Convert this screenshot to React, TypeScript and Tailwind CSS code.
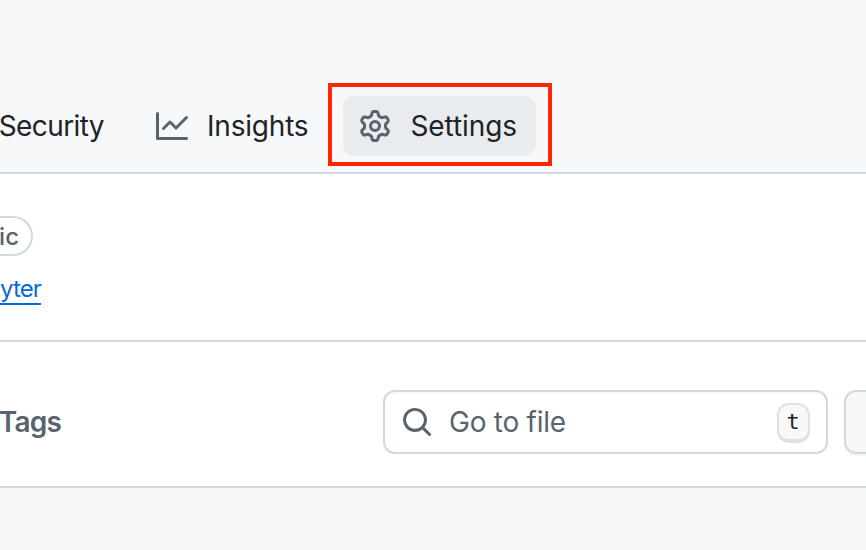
import React from "react";

type IconProps = { path: string; className?: string };

const GRAPH =
  "M1.5 1.75V13.5h13.75a.75.75 0 0 1 0 1.5H.75a.75.75 0 0 1-.75-.75V1.75a.75.75 0 0 1 1.5 0Zm14.28 2.53-5.25 5.25a.75.75 0 0 1-1.06 0L7 7.06 4.28 9.78a.751.751 0 0 1-1.042-.018.751.751 0 0 1-.018-1.042l3.25-3.25a.75.75 0 0 1 1.06 0L10 7.94l4.72-4.72a.751.751 0 0 1 1.042.018.751.751 0 0 1 .018 1.042Z";
const GEAR =
  "M8 0a8.2 8.2 0 0 1 .701.031C9.444.095 9.99.645 10.16 1.29l.288 1.107c.018.066.079.158.212.224.231.114.454.243.668.386.123.082.233.09.299.071l1.103-.303c.644-.176 1.392.021 1.82.63.27.385.506.792.704 1.218.315.675.111 1.422-.364 1.891l-.814.806c-.049.048-.098.147-.088.294.016.257.016.515 0 .772-.01.147.038.246.088.294l.814.806c.475.469.679 1.216.364 1.891a7.977 7.977 0 0 1-.704 1.217c-.428.61-1.176.807-1.82.63l-1.102-.302c-.067-.019-.177-.011-.3.071a5.909 5.909 0 0 1-.668.386c-.133.066-.194.158-.211.224l-.29 1.106c-.168.646-.715 1.196-1.458 1.26a8.006 8.006 0 0 1-1.402 0c-.743-.064-1.289-.614-1.458-1.26l-.289-1.106c-.018-.066-.079-.158-.212-.224a5.738 5.738 0 0 1-.668-.386c-.123-.082-.233-.09-.299-.071l-1.103.303c-.644.176-1.392-.021-1.82-.63a8.12 8.12 0 0 1-.704-1.218c-.315-.675-.111-1.422.363-1.891l.815-.806c.05-.048.098-.147.088-.294a6.214 6.214 0 0 1 0-.772c.01-.147-.038-.246-.088-.294l-.815-.806C.635 6.045.431 5.298.746 4.623a7.92 7.92 0 0 1 .704-1.217c.428-.61 1.176-.807 1.82-.63l1.102.302c.067.019.177.011.3-.071.214-.143.437-.272.668-.386.133-.066.194-.158.211-.224l.29-1.106C6.009.645 6.556.095 7.299.03 7.53.01 7.764 0 8 0Zm-.571 1.525c-.036.003-.108.036-.137.146l-.289 1.105c-.147.561-.549.967-.998 1.189-.173.086-.34.183-.5.29-.417.278-.97.423-1.529.27l-1.103-.303c-.109-.03-.175.016-.195.045-.22.312-.412.644-.573.99-.014.031-.021.11.059.19l.815.806c.411.406.562.957.53 1.456a4.709 4.709 0 0 0 0 .582c.032.499-.119 1.05-.53 1.456l-.815.806c-.081.08-.073.159-.059.19.162.346.353.677.573.989.02.03.085.076.195.046l1.102-.303c.56-.153 1.113-.008 1.53.27.161.107.328.204.501.29.447.222.85.629.997 1.189l.289 1.105c.029.109.101.143.137.146a6.6 6.6 0 0 0 1.142 0c.036-.003.108-.036.137-.146l.289-1.105c.147-.561.549-.967.998-1.189.173-.086.34-.183.5-.29.417-.278.97-.423 1.529-.27l1.103.303c.109.029.175-.016.195-.045.22-.313.411-.644.573-.99.014-.031.021-.11-.059-.19l-.815-.806c-.411-.406-.562-.957-.53-1.456a4.709 4.709 0 0 0 0-.582c-.032-.499.119-1.05.53-1.456l.815-.806c.081-.08.073-.159.059-.19a6.464 6.464 0 0 0-.573-.989c-.02-.03-.085-.076-.195-.046l-1.102.303c-.56.153-1.113.008-1.53-.27a4.44 4.44 0 0 0-.501-.29c-.447-.222-.85-.629-.997-1.189l-.289-1.105c-.029-.11-.101-.143-.137-.146a6.6 6.6 0 0 0-1.142 0ZM11 8a3 3 0 1 1-6 0 3 3 0 0 1 6 0ZM9.5 8a1.5 1.5 0 1 0-3.001.001A1.5 1.5 0 0 0 9.5 8Z";
const SEARCH =
  "M10.68 11.74a6 6 0 0 1-7.922-8.982 6 6 0 0 1 8.982 7.922l3.04 3.04a.749.749 0 0 1-.326 1.275.749.749 0 0 1-.734-.215ZM11.5 7a4.499 4.499 0 1 0-8.997 0A4.499 4.499 0 0 0 11.5 7Z";

function Icon({ path, className = "" }: IconProps) {
  return (
    <svg viewBox="0 0 16 16" fill="currentColor" className={`size-8 shrink-0 text-[#59636e] ${className}`}>
      <path d={path} />
    </svg>
  );
}

export default function App() {
  return (
    <div className="flex h-[550px] w-[866px] flex-col overflow-hidden bg-white font-['Inter','Liberation_Sans',sans-serif] text-[28px] leading-8 text-[#1f2328]">
      <header className="h-[174px] shrink-0 border-b-2 border-[#d1d9e0] bg-[#f6f8fa] pt-[83px]">
        <nav className="flex h-[83px] items-center">
          <a className="flex w-[104px] shrink-0 justify-end pt-[3px]">
            <span className="tracking-[-0.6px]">Security</span>
          </a>
          <a className="ml-[52px] flex w-[172px] shrink-0 items-center gap-[19px] pt-[3px]">
            <Icon path={GRAPH} />
            <span className="tracking-[-0.2px]">Insights</span>
          </a>
          <div className="h-[83px] w-[224px] shrink-0 border-4 border-[#ff2600] pt-[9px] pr-3 pl-[11px]">
            <a className="flex h-[60px] items-center gap-[19.5px] rounded-xl bg-[#e9ecef] pl-4">
              <Icon path={GEAR} />
              <span className="tracking-[-0.1px]">Settings</span>
            </a>
          </div>
        </nav>
      </header>

      <section className="flex h-[168px] shrink-0 flex-col items-start border-b-2 border-[#d1d9e0] pt-[42px]">
        <div className="flex h-10 w-[33px] items-center justify-end rounded-r-full border-2 border-l-0 border-[#d1d9e0] pt-px pr-3 text-2xl font-medium text-[#59636e]">
          ic
        </div>
        <div className="mt-[18px] flex h-[31px] w-[41px] justify-end border-b-2 border-[#0969da] text-2xl leading-[30px] tracking-[-0.9px] text-[#0969da]">
          yter
        </div>
      </section>

      <section className="flex h-[146px] shrink-0 items-start border-b-2 border-[#d1d9e0] pt-12">
        <div className="flex h-16 w-[61px] shrink-0 items-center justify-end font-semibold text-[#59636e]">
          <span className="tracking-[-0.8px]">Tags</span>
        </div>
        <label className="ml-[322px] flex h-16 w-[445px] shrink-0 items-center rounded-xl border-2 border-[#d1d9e0] pr-4 pl-4 text-[#59636e] shadow-[inset_0_2px_0_#f6f8fa]">
          <Icon path={SEARCH} />
          <span className="ml-4 flex-1 tracking-[-0.25px]">Go to file</span>
          <kbd className="mt-[2px] flex h-10 w-[33px] items-center justify-center rounded-xl border-2 border-b-4 border-[#dde2e8] bg-[#f6f8fa] pr-px font-['DejaVu_Sans_Mono',monospace] text-[22px] leading-none text-[#1f2328]">
            t
          </kbd>
        </label>
        <button className="ml-4 h-16 w-[60px] shrink-0 rounded-xl border-2 border-[#d1d9e0] bg-[#f6f8fa] shadow-[0_2px_0_#1f23280a]" />
      </section>

      <footer className="flex-1 bg-[#f6f8fa]" />
    </div>
  );
}
